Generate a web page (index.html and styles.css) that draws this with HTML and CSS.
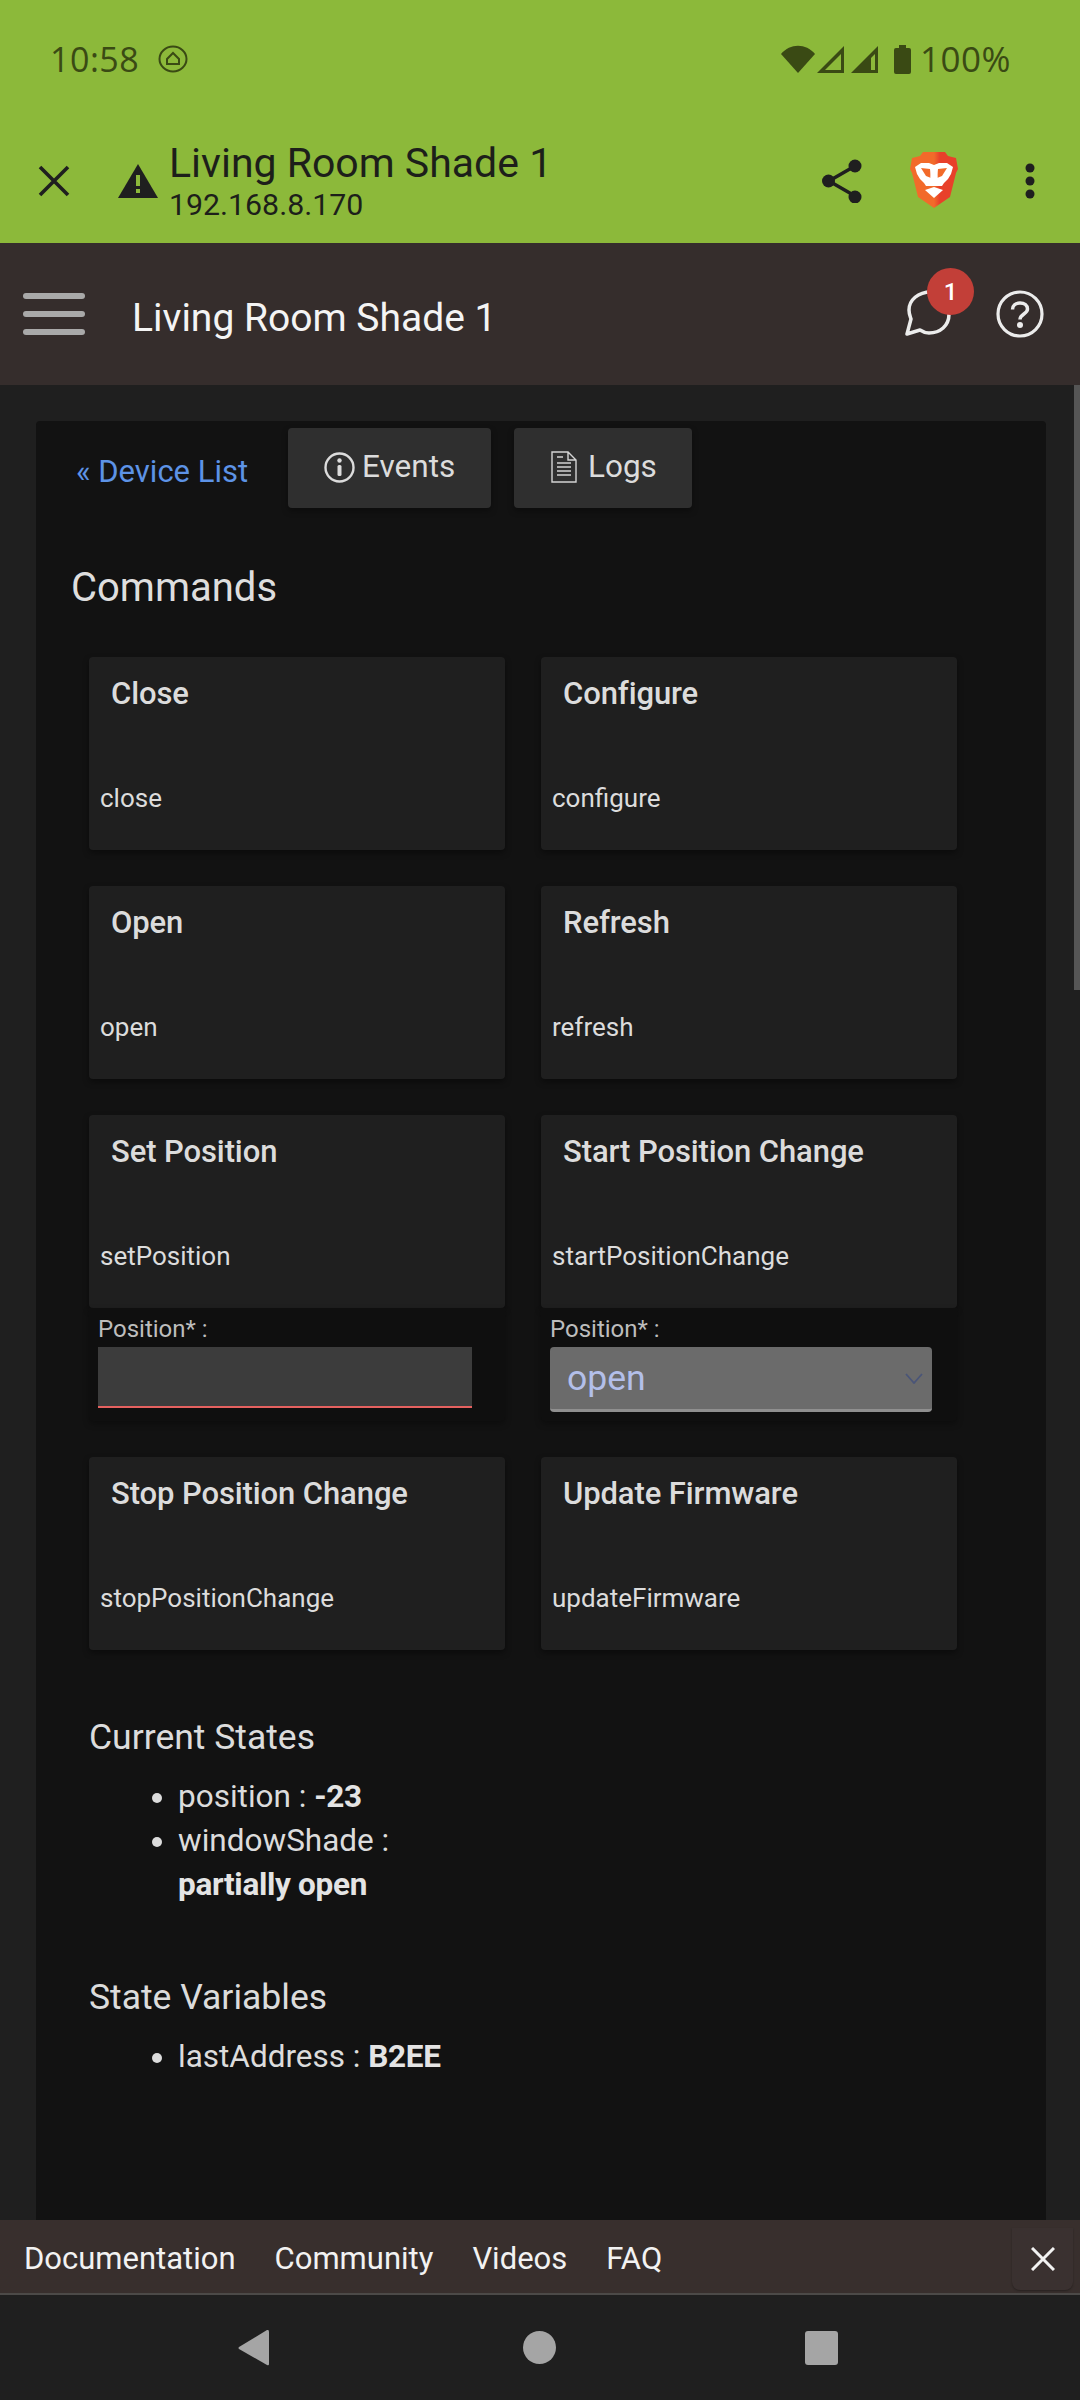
FILE: index.html
```html
<!DOCTYPE html>
<html lang="en">
<head>
<meta charset="utf-8">
<title>Living Room Shade 1</title>
<link rel="stylesheet" href="styles.css">
</head>
<body>
<div class="phone">
  <div class="top">
    <div class="status">
      <div class="status-left">
        <span class="clock">10:58</span>
        <svg class="home-ic" width="30" height="28" viewBox="0 0 30 28"><ellipse cx="15" cy="14" rx="13.5" ry="12.5" fill="none" stroke="#3a4a14" stroke-width="2"/><path d="M8 19h14M9 14l6-6 6 6v5H9z" fill="none" stroke="#3a4a14" stroke-width="2"/></svg>
      </div>
      <div class="status-right">
        <svg width="34" height="28" viewBox="0 0 34 28"><path d="M0 9C9 -2 25 -2 34 9L17 28z" fill="#3a4a14"/></svg>
        <svg class="sig" width="28" height="28" viewBox="0 0 28 28"><path d="M0 28L27 1V28zM8 25H24V9z" fill="#3a4a14" fill-rule="evenodd"/></svg>
        <svg class="sig2" width="28" height="28" viewBox="0 0 28 28"><path d="M0 28L27 1V28zM20 25H24V9L20 13z" fill="#3a4a14" fill-rule="evenodd"/></svg>
        <svg class="bat" width="17" height="29" viewBox="0 0 17 29"><path d="M5 0h7v3h3q2 0 2 2v22q0 2-2 2H2q-2 0-2-2V5q0-2 2-2h3z" fill="#3a4a14"/></svg>
        <span class="pct">100%</span>
      </div>
    </div>
    <div class="toolbar">
      <svg class="close-ic" width="32" height="32" viewBox="0 0 32 32"><path d="M2 2L30 30M30 2L2 30" stroke="#1f1f1f" stroke-width="3.600" fill="none"/></svg>
      <svg class="warn-ic" width="40" height="34" viewBox="0 0 40 34"><path d="M20 0L40 34H0z" fill="#1f1f1f"/><rect x="18" y="11" width="4" height="11" fill="#8cb93a"/><rect x="18" y="25" width="4" height="4" fill="#8cb93a"/></svg>
      <div class="url">
        <div class="url-title">Living Room Shade 1</div>
        <div class="url-host">192.168.8.170</div>
      </div>
      <svg class="share-ic" width="40" height="44" viewBox="0 0 40 44"><path d="M33 7L7 22L33 37" fill="none" stroke="#1f1f1f" stroke-width="3.500"/><circle cx="33" cy="7" r="6.500" fill="#1f1f1f"/><circle cx="6.500" cy="22" r="6.500" fill="#1f1f1f"/><circle cx="33" cy="38" r="6.500" fill="#1f1f1f"/></svg>
      <svg class="brave-ic" width="48" height="56" viewBox="0 0 48 56">
        <defs><linearGradient id="bg" x1="0" y1="0" x2="1" y2="0"><stop offset="0.500" stop-color="#f26a2a"/><stop offset="0.620" stop-color="#e8402a"/></linearGradient></defs>
        <path d="M13 0H35L38 4L46 6L48 17L46 21L40 45L24 56L8 45L2 21L0 17L2 6L10 4z" fill="url(#bg)"/>
        <path d="M5 15L11 11H19L24 13L29 11H37L43 15L41 22L38 27L34 31L32 34H16L14 31L10 27L7 22z" fill="#fff"/>
        <path d="M11 16L20 17L21 26L16 24zM37 16L28 17L27 26L32 24z" fill="#f26a2a"/>
        <path d="M21 17H27L28 30L24 33L20 30z" fill="#fff"/>
        <path d="M15 38L24 35L33 38L24 46z" fill="#fff"/>
      </svg>
      <svg class="kebab-ic" width="10" height="36" viewBox="0 0 10 36"><circle cx="5" cy="5" r="4.500" fill="#1f1f1f"/><circle cx="5" cy="18" r="4.500" fill="#1f1f1f"/><circle cx="5" cy="31" r="4.500" fill="#1f1f1f"/></svg>
    </div>
  </div>

  <header class="appbar">
    <div class="burger"><i></i><i></i><i></i></div>
    <h1 class="app-title">Living Room Shade 1</h1>
    <div class="chat">
      <svg width="46" height="46" viewBox="0 0 46 46"><path d="M26 2C13 2 4 10 4 20C4 24 5 26 6 29L2 44L15 40C18 42 21 43 24 43C35 43 44 36 44 24" fill="none" stroke="#ececec" stroke-width="3.500" stroke-linejoin="round" stroke-linecap="round"/></svg>
      <span class="badge">1</span>
    </div>
    <svg class="help-ic" width="48" height="48" viewBox="0 0 48 48"><circle cx="24" cy="24" r="22" fill="none" stroke="#ececec" stroke-width="3.200"/><path d="M16.500 19.500C16.500 15.500 19.500 13 24 13C28.500 13 31.500 15.500 31.500 19C31.500 24 24 24 24 29.500" fill="none" stroke="#ececec" stroke-width="3.500"/><circle cx="24" cy="35" r="3" fill="#ececec"/></svg>
  </header>

  <main class="content">
    <div class="scrollbar"></div>
    <section class="panel">
      <div class="tabs">
        <a class="back">« Device List</a>
        <div class="tab tab-events">
          <svg width="31" height="31" viewBox="0 0 31 31"><circle cx="15.500" cy="15.500" r="14" fill="none" stroke="#dcdcdc" stroke-width="2.400"/><circle cx="15.500" cy="8.500" r="2.200" fill="#dcdcdc"/><rect x="13.500" y="13" width="4" height="11" rx="1.500" fill="#dcdcdc"/></svg>
          <span>Events</span>
        </div>
        <div class="tab tab-logs">
          <svg width="26" height="32" viewBox="0 0 26 32"><path d="M1 1H17L25 9V31H1z M17 1V9H25" fill="none" stroke="#d4d4d4" stroke-width="1.400"/><path d="M6 6H12M6 12H20M6 16H20M6 20H20M6 24H20" stroke="#d4d4d4" stroke-width="1.500" fill="none"/></svg>
          <span>Logs</span>
        </div>
      </div>
      <h2 class="commands">Commands</h2>
      <div class="grid">
        <div class="cmd"><div class="card"><div class="card-title">Close</div><div class="card-sub">close</div></div></div>
        <div class="cmd"><div class="card"><div class="card-title">Configure</div><div class="card-sub">configure</div></div></div>
        <div class="cmd"><div class="card"><div class="card-title">Open</div><div class="card-sub">open</div></div></div>
        <div class="cmd"><div class="card"><div class="card-title">Refresh</div><div class="card-sub">refresh</div></div></div>
        <div class="cmd">
          <div class="card"><div class="card-title">Set Position</div><div class="card-sub">setPosition</div></div>
          <div class="params">
            <label class="param-label">Position* :</label>
            <div class="field"></div>
          </div>
        </div>
        <div class="cmd">
          <div class="card"><div class="card-title">Start Position Change</div><div class="card-sub">startPositionChange</div></div>
          <div class="params">
            <label class="param-label">Position* :</label>
            <div class="select"><span>open</span>
              <svg width="18" height="11" viewBox="0 0 18 11"><path d="M1 1L9 10L17 1" fill="none" stroke="#4a5578" stroke-width="1.800"/></svg>
            </div>
          </div>
        </div>
        <div class="cmd"><div class="card"><div class="card-title">Stop Position Change</div><div class="card-sub">stopPositionChange</div></div></div>
        <div class="cmd"><div class="card"><div class="card-title">Update Firmware</div><div class="card-sub">updateFirmware</div></div></div>
      </div>
      <h3 class="section states">Current States</h3>
      <ul class="list">
        <li>position : <b>-23</b></li>
        <li>windowShade :<br><b>partially open</b></li>
      </ul>
      <h3 class="section vars">State Variables</h3>
      <ul class="list">
        <li>lastAddress : <b>B2EE</b></li>
      </ul>
    </section>
  </main>

  <footer class="footer">
    <nav class="links">
      <a>Documentation</a>
      <a>Community</a>
      <a>Videos</a>
      <a>FAQ</a>
    </nav>
    <div class="foot-close"><svg width="24" height="24" viewBox="0 0 24 24"><path d="M1 1L23 23M23 1L1 23" stroke="#f2f2f2" stroke-width="3" fill="none"/></svg></div>
  </footer>

  <div class="navbar">
    <svg width="32" height="36" viewBox="0 0 32 36"><path d="M30 0Q31 0 31 2V34Q31 36 29 35L1 19Q0 18 1 17L29 0z" fill="#a5a5a5"/></svg>
    <svg width="33" height="33" viewBox="0 0 33 33"><circle cx="16.500" cy="16.500" r="16.500" fill="#a5a5a5"/></svg>
    <svg width="33" height="34" viewBox="0 0 33 34"><rect width="33" height="34" rx="3" fill="#a5a5a5"/></svg>
  </div>
</div>
</body>
</html>
```

FILE: styles.css
```css
* { box-sizing: border-box; }
html, body { margin: 0; padding: 0; background: #1f1f1f; }
body { font-family: Roboto, "Liberation Sans", sans-serif; }
.phone { width: 1080px; height: 2400px; display: flex; flex-direction: column; overflow: hidden; }

.top { height: 243px; background: #8cb93a; flex: none; }
.status { height: 118px; padding: 0 69px 0 50px; display: flex; justify-content: space-between; align-items: center; color: #3a4a14; }
.status-left, .status-right { display: flex; align-items: center; }
.clock { font-family: "Open Sans", Roboto, sans-serif; font-size: 34px; line-height: 40px; letter-spacing: 0.5px; }
.home-ic { margin-left: 19px; }
.sig { margin-left: 2px; }
.sig2 { margin-left: 6px; }
.bat { margin-left: 15px; }
.pct { font-family: "Open Sans", Roboto, sans-serif; font-size: 35px; line-height: 40px; margin-left: 9px; letter-spacing: 0.5px; }

.toolbar { height: 125px; display: flex; align-items: center; padding-left: 38px; }
.close-ic { flex: none; }
.warn-ic { flex: none; margin-left: 48px; }
.url { margin-left: 11px; width: 653px; color: #1d1f1a; margin-top: 3px; }
.url-title { font-size: 41px; line-height: 46px; }
.url-host { font-size: 30.3px; line-height: 38px; }
.share-ic { flex: none; }
.brave-ic { flex: none; margin-left: 48px; margin-top: -2px; }
.kebab-ic { flex: none; margin-left: 67px; }

.appbar { height: 142px; background: #352d2c; display: flex; align-items: center; flex: none; position: relative; }
.burger { margin-left: 23px; width: 62px; display: flex; flex-direction: column; gap: 12px; }
.burger i { display: block; height: 6px; border-radius: 3px; background: #a9a9a9; }
.app-title { margin: 8px 0 0 47px; font-size: 39px; font-weight: 400; color: #f4f4f4; line-height: 44px; width: 773px; }
.chat { position: relative; width: 46px; height: 46px; flex: none; margin-top: -2px; }
.badge { position: absolute; left: 22px; top: -22px; width: 47px; height: 47px; border-radius: 50%; background: #c23f38; color: #fff; font-size: 24px; font-weight: 500; display: flex; align-items: center; justify-content: center; }
.help-ic { flex: none; margin-left: 45px; }

.content { flex: 1; min-height: 0; position: relative; overflow: hidden; padding: 36px 34px 0 36px; background: #1f1f1f; }
.scrollbar { position: absolute; right: 0; top: 0; width: 6px; height: 605px; background: #555; }
.panel { background: #121212; height: 1900px; padding: 7px 0 0 36px; border-radius: 4px 4px 0 0; }

.tabs { display: flex; align-items: flex-start; height: 80px; }
.back { color: #5d93e6; font-size: 31px; line-height: 44px; margin: 22px 0 0 4px; width: 212px; flex: none; }
.tab { height: 80px; background: #2f2f2f; border-radius: 4px; color: #dcdcdc; font-size: 31.5px; line-height: 44px; display: flex; align-items: center; box-shadow: 0 3px 6px rgba(0,0,0,.35); padding-bottom: 2px; }
.tab-events { width: 203px; padding-left: 36px; gap: 7px; }
.tab-logs { width: 178px; margin-left: 23px; padding-left: 37px; gap: 11px; }
.commands { margin: 58px 0 0 -1px; font-size: 40px; font-weight: 400; color: #dedede; line-height: 44px; }

.grid { margin: 47px 0 0 17px; display: grid; grid-template-columns: 416px 416px; column-gap: 36px; row-gap: 36px; align-items: start; }
.card { height: 193px; background: #1f1f1f; border-radius: 4px; padding: 15px 0 0 11px; box-shadow: 0 3px 6px rgba(0,0,0,.4); }
.card-title { font-size: 31px; font-weight: 500; line-height: 44px; color: #dcdcdc; margin-left: 11px; letter-spacing: -0.1px; }
.card-sub { font-size: 26px; line-height: 36px; color: #dcdcdc; margin-top: 64px; }
.params { height: 113px; background: #0f0f0f; padding: 0 0 0 9px; box-shadow: 0 3px 6px rgba(0,0,0,.3); border-radius: 0 0 4px 4px; }
.param-label { display: block; height: 39px; font-size: 24px; line-height: 42px; color: #bdbdbd; }
.field { width: 374px; height: 61px; background: #3c3c3c; border-bottom: 2px solid #e5615f; }
.select { width: 382px; height: 65px; background: #6b6b6b; border-bottom: 3px solid #8f8f8f; border-radius: 4px; display: flex; align-items: center; justify-content: space-between; padding: 0 9px 0 17px; color: #b3bfe9; font-size: 35.5px; }

.section { margin: 0 0 0 17px; font-size: 35.5px; font-weight: 400; color: #dcdcdc; line-height: 44px; }
.states { margin-top: 65px; }
.vars { margin-top: 68px; }
.list { margin: 16px 0 0 17px; padding: 0 0 0 89px; font-size: 31.5px; line-height: 44px; color: #dcdcdc; }
.list b { font-weight: 700; color: #e4e4e4; letter-spacing: -0.3px; }

.footer { height: 75px; flex: none; background: #382f2d; border-bottom: 2px solid #4c4a48; display: flex; justify-content: space-between; position: relative; }
.links { display: flex; padding-left: 24px; gap: 39px; font-size: 31px; line-height: 78px; color: #f2f2f2; }
.foot-close { width: 61px; height: 62px; margin: 8px 7px 0 0; border-radius: 0 0 8px 8px; background: #3a3130; display: flex; align-items: center; justify-content: center; box-shadow: 0 1px 2px rgba(0,0,0,.3); }

.navbar { height: 105px; flex: none; background: #1f1f1f; display: flex; align-items: center; padding-left: 238px; }
.navbar svg:nth-child(2) { margin-left: 253px; }
.navbar svg:nth-child(3) { margin-left: 249px; }
```
